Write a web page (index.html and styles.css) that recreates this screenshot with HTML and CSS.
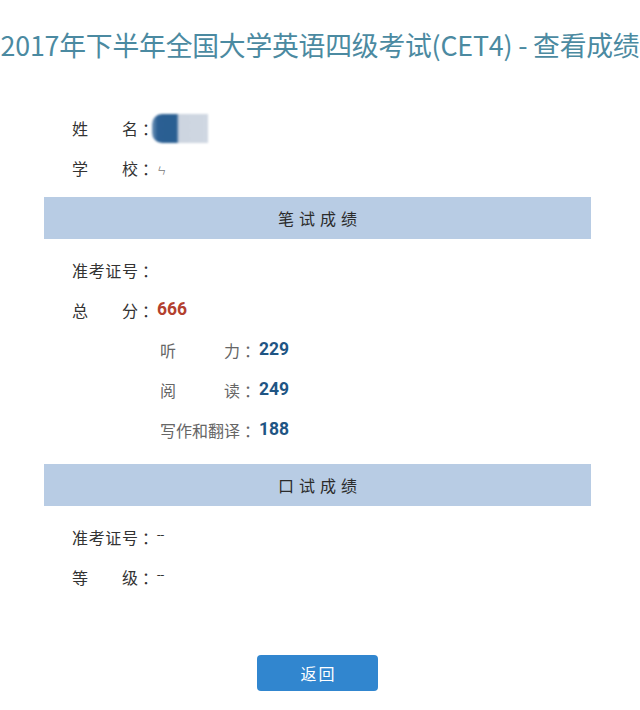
FILE: index.html
```html
<!DOCTYPE html>
<html lang="zh-CN">
<head>
<meta charset="utf-8">
<title>查看成绩</title>
<link rel="stylesheet" href="styles.css">
</head>
<body>
<div class="page">
  <h1 class="title">2017年下半年全国大学英语四级考试(CET4) - 查看成绩</h1>

  <div class="card">
    <div class="info">
      <div class="row"><span class="label">姓名</span><span class="colon">：</span><span class="name-blur"></span></div>
      <div class="row"><span class="label">学校</span><span class="colon">：</span><span class="school-mark">ㄣ</span></div>
    </div>

    <div class="section-head">笔试成绩</div>
    <div class="info">
      <div class="row"><span class="label">准考证号</span><span class="colon">：</span></div>
      <div class="row"><span class="label">总分</span><span class="colon">：</span><span class="total">666</span></div>
      <div class="row sub"><span class="label wide">听力</span><span class="colon">：</span><span class="score">229</span></div>
      <div class="row sub"><span class="label wide">阅读</span><span class="colon">：</span><span class="score">249</span></div>
      <div class="row sub"><span class="label wide">写作和翻译</span><span class="colon">：</span><span class="score">188</span></div>
    </div>

    <div class="section-head second">口试成绩</div>
    <div class="info">
      <div class="row"><span class="label">准考证号</span><span class="colon">：</span><span class="dash">--</span></div>
      <div class="row"><span class="label">等级</span><span class="colon">：</span><span class="dash">--</span></div>
    </div>

    <div class="actions"><button class="btn">返回</button></div>
  </div>
</div>
</body>
</html>
```
FILE: styles.css
```css
html, body {
  margin: 0;
  padding: 0;
  background: #ffffff;
}
body {
  font-family: "Noto Sans CJK SC", "Noto Sans", sans-serif;
  color: #333333;
}
.page {
  width: 640px;
  overflow: hidden;
}
.title {
  margin: 27px 0 0 0;
  height: 36px;
  line-height: 36px;
  font-size: 26.8px;
  font-weight: 400;
  color: #4b8aa1;
  white-space: nowrap;
  letter-spacing: -0.2px;
  display: flex;
  justify-content: center;
}
.card {
  margin: 45px 0 0 44px;
  width: 547px;
}
.info {
  display: flex;
  flex-direction: column;
}
.row {
  height: 40px;
  display: flex;
  align-items: center;
  padding-left: 28px;
  font-size: 16px;
  color: #333;
}
.row.sub {
  padding-left: 116px;
  color: #666;
}
.label {
  display: inline-block;
  width: 66px;
  text-align: justify;
  text-align-last: justify;
  white-space: nowrap;
}
.label.wide {
  width: 80px;
}
.colon {
  display: inline-block;
  width: 15px;
  padding-left: 4px;
}
.name-blur {
  display: inline-block;
  width: 56px;
  height: 29px;
  margin-left: -5px;
  background: linear-gradient(90deg, #6f93b8 0%, #2b5f93 10%, #2a5f92 44%, #cdd5e0 48%, #cfd7e2 100%);
  border-radius: 10px 0 0 10px;
  filter: blur(0.8px);
}
.school-mark {
  font-size: 9px;
  color: #777;
  margin-top: 4px;
}
.total {
  font-family: "Roboto", "Liberation Sans", sans-serif;
  font-weight: 700;
  font-size: 17.5px;
  color: #b3402f;
  margin-top: -3px;
}
.score {
  font-family: "Roboto", "Liberation Sans", sans-serif;
  font-weight: 700;
  font-size: 17.5px;
  color: #1f5584;
  margin-top: -3px;
}
.dash {
  font-family: "Roboto", "Liberation Sans", sans-serif;
  font-size: 13px;
  color: #333;
  margin-top: -6px;
}
.section-head {
  margin-top: 9px;
  height: 42px;
  line-height: 42px;
  background: #b8cce4;
  text-align: center;
  font-size: 16px;
  letter-spacing: 5px;
  padding-left: 5px;
  color: #2b2b2b;
}
.section-head.second {
  margin-top: 14px;
}
.section-head + .info {
  margin-top: 11px;
}
.actions {
  margin-top: 58px;
  display: flex;
  padding-left: 213px;
}
.btn {
  width: 121px;
  height: 36px;
  border: none;
  border-radius: 4px;
  background: #3186cf;
  color: #ffffff;
  font-family: "Noto Sans CJK SC", sans-serif;
  font-size: 16px;
  letter-spacing: 2px;
  padding: 0 0 0 2px;
}
```
